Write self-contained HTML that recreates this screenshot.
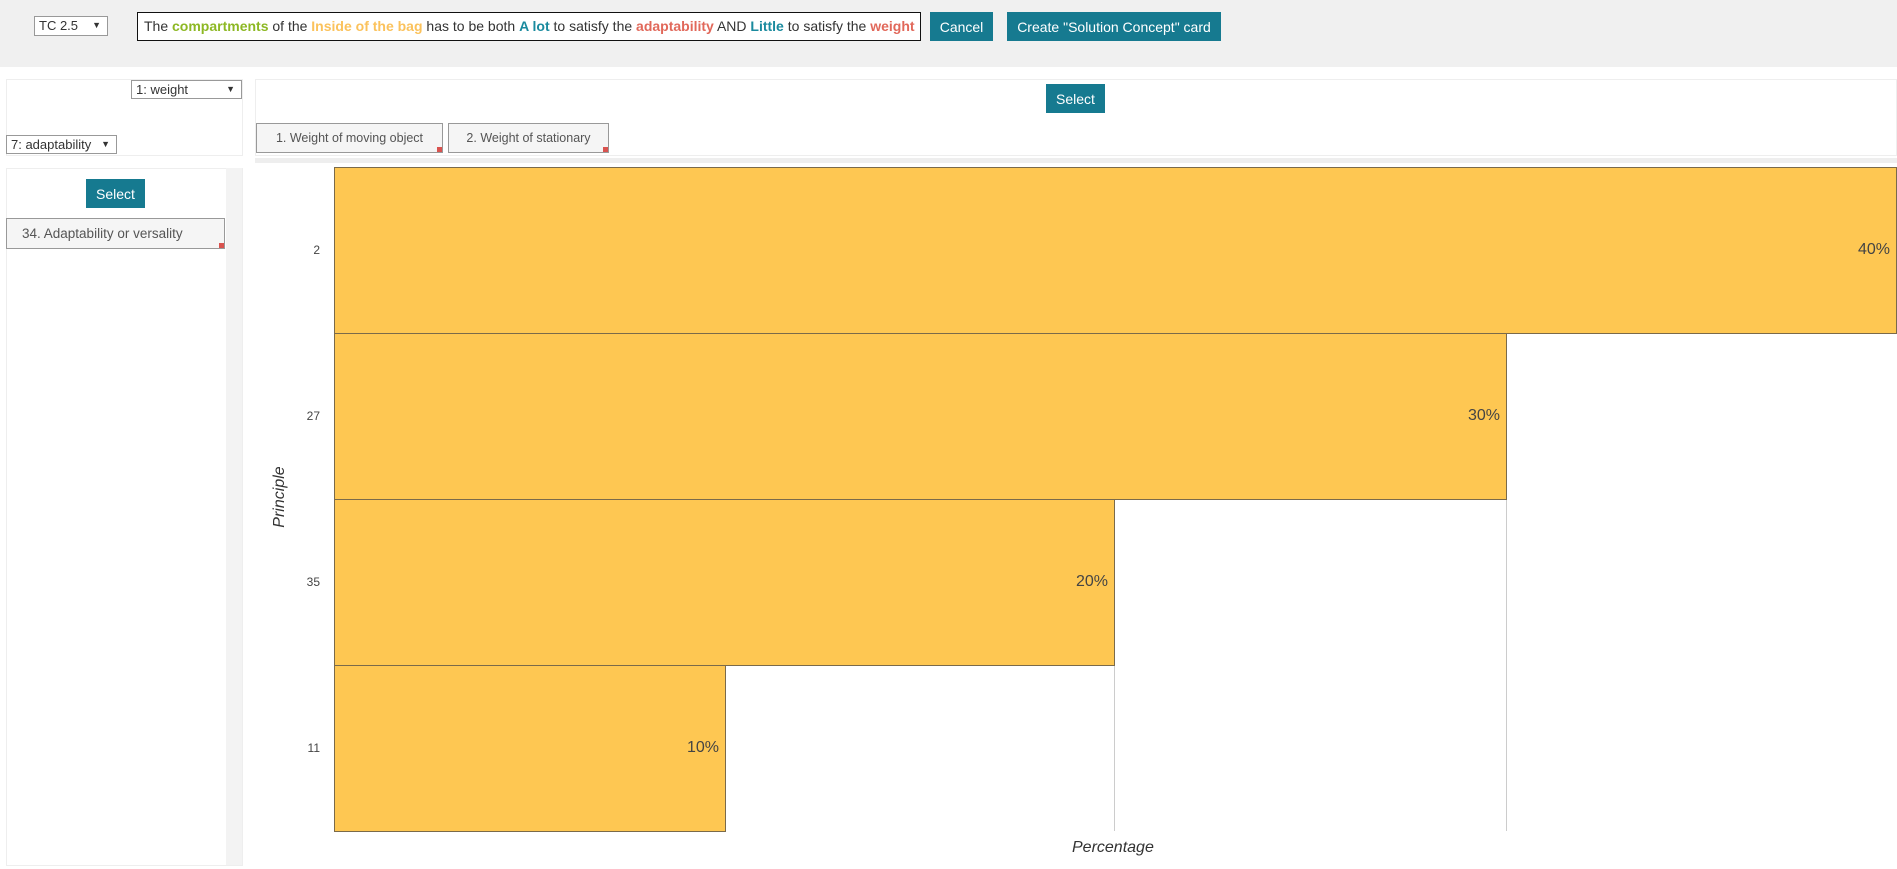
<!DOCTYPE html>
<html><head><meta charset="utf-8"><style>
body{margin:0;width:1897px;height:869px;position:relative;background:#fff;font-family:"Liberation Sans",Arial,sans-serif;overflow:hidden;color:#333}
.a{position:absolute;box-sizing:border-box}
.btn{background:#167a90;color:#fff;font-size:14px;display:flex;align-items:center;justify-content:center}
.sel{border:1px solid #999;background:#fff;font-size:13px;padding-left:4px;line-height:17px}
.sel:after{content:"▼";position:absolute;right:6px;top:0;font-size:9px}
.tab{background:#f5f5f5;border:1px solid #999;font-size:12.5px;color:#555;display:flex;align-items:center;justify-content:center}
.tab i{position:absolute;right:0;bottom:0;width:5px;height:5px;background:#d9534f}
.panel{background:#fff;border:1px solid #eee}
.bar{position:absolute;background:#fec752;border:1px solid #7a6a4a;box-sizing:border-box}
.pl{position:absolute;font-size:16px;color:#444}
.tk{position:absolute;font-size:12px;color:#444;width:30px;text-align:right;left:290px}
</style></head><body>
<div class="a" style="left:0;top:0;width:1897px;height:67px;background:#f0f0f0"></div>
<div class="a sel" style="left:34px;top:16px;width:74px;height:20px">TC 2.5</div>
<div class="a" style="left:137px;top:12px;width:784px;height:29px;border:1px solid #111;background:#fff;font-size:14px;line-height:27px;padding-left:6px;white-space:nowrap;letter-spacing:0">The <b style="color:#8db824">compartments</b> of the <b style="color:#fbc25c">Inside of the bag</b> has to be both <b style="color:#1a8a9e">A lot</b> to satisfy the <b style="color:#e1685a">adaptability</b> AND <b style="color:#1a8a9e">Little</b> to satisfy the <b style="color:#e1685a">weight</b></div>
<div class="a btn" style="left:930px;top:12px;width:63px;height:29px">Cancel</div>
<div class="a btn" style="left:1007px;top:12px;width:214px;height:29px">Create "Solution Concept" card</div>

<div class="a panel" style="left:6px;top:79px;width:237px;height:77px"></div>
<div class="a sel" style="left:131px;top:80px;width:111px;height:19px">1: weight</div>
<div class="a sel" style="left:6px;top:135px;width:111px;height:19px">7: adaptability</div>

<div class="a panel" style="left:255px;top:79px;width:1642px;height:77px"></div>
<div class="a btn" style="left:1046px;top:84px;width:59px;height:29px">Select</div>
<div class="a tab" style="left:256px;top:123px;width:187px;height:30px">1. Weight of moving object<i></i></div>
<div class="a tab" style="left:448px;top:123px;width:161px;height:30px">2. Weight of stationary<i></i></div>
<div class="a" style="left:255px;top:158px;width:1642px;height:5px;background:#eee"></div>

<div class="a panel" style="left:6px;top:168px;width:237px;height:698px"></div>
<div class="a" style="left:226px;top:168px;width:16px;height:697px;background:#f3f3f3"></div>
<div class="a btn" style="left:86px;top:179px;width:59px;height:29px">Select</div>
<div class="a tab" style="left:6px;top:218px;width:219px;height:31px;justify-content:flex-start;padding-left:15px;font-size:13.5px">34. Adaptability or versality<i></i></div>

<div class="a" style="left:1114px;top:499px;width:1px;height:332px;background:#ccc"></div>
<div class="a" style="left:1506px;top:333px;width:1px;height:498px;background:#ccc"></div>
<div class="bar" style="left:334px;top:167px;width:1563px;height:167px"></div>
<div class="bar" style="left:334px;top:333px;width:1173px;height:167px"></div>
<div class="bar" style="left:334px;top:499px;width:781px;height:167px"></div>
<div class="bar" style="left:334px;top:665px;width:392px;height:167px"></div>
<div class="pl" style="left:1858px;top:241px">40%</div>
<div class="pl" style="left:1468px;top:407px">30%</div>
<div class="pl" style="left:1076px;top:573px">20%</div>
<div class="pl" style="left:687px;top:739px">10%</div>
<div class="tk" style="top:243px">2</div>
<div class="tk" style="top:409px">27</div>
<div class="tk" style="top:575px">35</div>
<div class="tk" style="top:741px">11</div>
<div class="a" style="left:1072px;top:839px;font-size:16px;font-style:italic;color:#333">Percentage</div>
<div class="a" style="left:240px;top:488px;width:80px;text-align:center;font-size:16px;font-style:italic;transform:rotate(-90deg)">Principle</div>
</body></html>
